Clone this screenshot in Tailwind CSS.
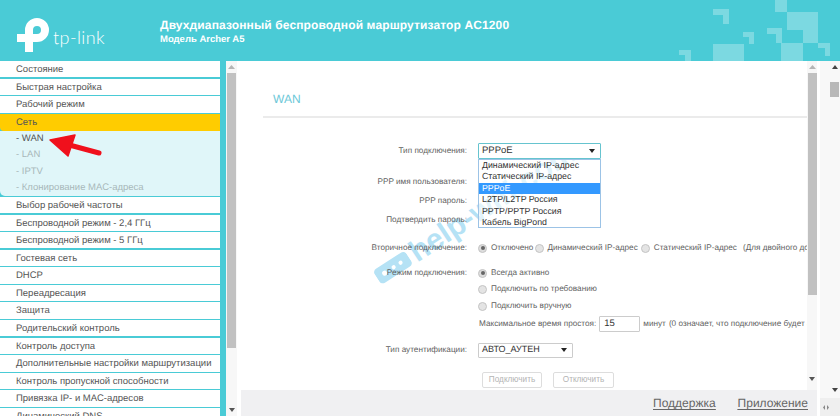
<!DOCTYPE html>
<html lang="ru">
<head>
<meta charset="utf-8">
<script src="https://cdn.jsdelivr.net/npm/@tailwindcss/browser@4"></script>
</head>
<body class="m-0 overflow-hidden bg-white">
<div class="w-[840px] h-[416px] flex flex-col overflow-hidden font-['Liberation_Sans',Arial,sans-serif] text-[#5f5f5f] [text-rendering:geometricPrecision]">

  <header class="relative h-[61px] shrink-0 bg-[#4acbd6] overflow-hidden flex">
    <svg class="absolute left-0 top-0" width="840" height="61" viewBox="0 0 840 61" fill="#fff" fill-opacity=".28">
      <path d="M713 9H729V24H723V15H713Z"/>
      <path d="M775 0H787V12H818V43H803V30H787V12H775Z"/>
      <path d="M713 44H744V61H713Z"/>
      <path d="M743 32H754V44H749V37H743Z"/>
      <path d="M767 28H782V43H776V34H767Z"/>
      <path d="M781 43H803V61H781Z"/>
      <path d="M818 43H830V56H825V48H818Z"/>
      <path d="M679 50H691V61H685V55H679Z"/>
    </svg>
    <div class="relative w-[160px] shrink-0">
      <svg class="absolute left-0 top-0" width="60" height="61" viewBox="0 0 60 61" fill="none" stroke="#fff" stroke-width="8">
        <path d="M29 52V30A8 8 0 1 1 37 38H17"/>
      </svg>
      <span class="absolute left-[53px] top-[26px] font-['Lato',sans-serif] font-light text-[18px] leading-[22px] text-white tracking-[0.4px]">tp-link</span>
    </div>
    <div class="relative pt-[17px] text-white font-bold">
      <div class="text-[12px] leading-[16px] tracking-[0.12px] whitespace-nowrap">Двухдиапазонный беспроводной маршрутизатор AC1200</div>
      <div class="text-[9.5px] leading-[12px] mt-[1px] whitespace-nowrap">Модель Archer A5</div>
    </div>
  </header>

  <div class="flex flex-1 min-h-0">
    <nav class="relative w-[226px] shrink-0 bg-[#4acbd6] pr-[6px] overflow-hidden text-[9.5px] text-[#555]">
      <div class="h-[16.4px] mb-[1.2px] bg-white pl-4 pt-[2px] flex items-center">Состояние</div>
      <div class="h-[16.4px] mb-[1.2px] bg-white pl-4 pt-[2px] flex items-center">Быстрая настройка</div>
      <div class="h-[16.6px] mb-[1.2px] bg-white pl-4 pt-[2px] flex items-center">Рабочий режим</div>
      <div class="h-[17px] bg-[#ffcc00] rounded-bl-[4px] pl-4 pt-[2px] flex items-center">Сеть</div>
      <div class="h-[65px] bg-[#e0f6f9] rounded-bl-[5px] mb-[1px]">
        <div class="h-[16.3px] pl-4 flex items-center text-[#555]">- WAN</div>
        <div class="h-[16.3px] pl-4 flex items-center text-[#a8b8ba]">- LAN</div>
        <div class="h-[16.3px] pl-4 flex items-center text-[#a8b8ba]">- IPTV</div>
        <div class="h-[16.3px] pl-4 flex items-center text-[#a8b8ba]">- Клонирование МАС-адреса</div>
      </div>
      <div class="h-[16.4px] mb-[1.2px] bg-white pl-4 pt-[2px] flex items-center">Выбор рабочей частоты</div>
      <div class="h-[16.4px] mb-[1.2px] bg-white pl-4 pt-[2px] flex items-center">Беспроводной режим - 2,4 ГГц</div>
      <div class="h-[16.4px] mb-[1.2px] bg-white pl-4 pt-[2px] flex items-center">Беспроводной режим - 5 ГГц</div>
      <div class="h-[16.4px] mb-[1.2px] bg-white pl-4 pt-[2px] flex items-center">Гостевая сеть</div>
      <div class="h-[16.4px] mb-[1.2px] bg-white pl-4 pt-[2px] flex items-center">DHCP</div>
      <div class="h-[16.4px] mb-[1.2px] bg-white pl-4 pt-[2px] flex items-center">Переадресация</div>
      <div class="h-[16.4px] mb-[1.2px] bg-white pl-4 pt-[2px] flex items-center">Защита</div>
      <div class="h-[16.4px] mb-[1.2px] bg-white pl-4 pt-[2px] flex items-center">Родительский контроль</div>
      <div class="h-[16.4px] mb-[1.2px] bg-white pl-4 pt-[2px] flex items-center">Контроль доступа</div>
      <div class="h-[16.4px] mb-[1.2px] bg-white pl-4 pt-[2px] flex items-center whitespace-nowrap">Дополнительные настройки маршрутизации</div>
      <div class="h-[16.4px] mb-[1.2px] bg-white pl-4 pt-[2px] flex items-center">Контроль пропускной способности</div>
      <div class="h-[16.4px] mb-[1.2px] bg-white pl-4 pt-[2px] flex items-center">Привязка IP- и МАС-адресов</div>
      <div class="h-[16.4px] mb-[1.2px] bg-white pl-4 pt-[2px] flex items-center">Динамический DNS</div>
      <svg class="absolute left-0 top-0" width="226" height="120" viewBox="0 61 226 120" fill="none">
        <path d="M99 153L62 143" stroke="#f0101c" stroke-width="5" stroke-linecap="round"/>
        <path d="M50 140L75 135L68 156Z" fill="#f0101c" stroke="#f0101c" stroke-width="1.5" stroke-linejoin="round"/>
      </svg>
    </nav>

    <div class="w-[11px] shrink-0 bg-[#f7f7f7] flex flex-col items-center">
      <div class="h-[12px] flex items-center text-[#b5b5b5]"><svg width="7" height="4" viewBox="0 0 7 4" fill="currentColor"><path d="M3.5 0L7 4H0Z"/></svg></div>
      <div class="w-[9px] h-[275px] bg-[#c1c1c1]"></div>
      <div class="flex-1 flex items-end pb-[4px] text-[#555]"><svg width="6" height="4" viewBox="0 0 6 4" fill="currentColor"><path d="M0 0H6L3 4Z"/></svg></div>
    </div>

    <div class="w-[580px] shrink-0 flex flex-col">
      <div class="relative h-[329px] flex overflow-hidden">
        <main class="relative w-[570px] shrink-0 overflow-hidden text-[8.2px]">
          <div class="absolute left-[140px] top-[200px] -rotate-[33deg] flex items-center gap-[4px] origin-left">
            <svg width="38" height="22" viewBox="0 0 46 26" fill="#b5e2f5"><rect width="46" height="20" y="3" rx="5"/><circle cx="11" cy="13" r="3" fill="#fff"/><circle cx="24" cy="13" r="2.5" fill="#fff"/><circle cx="34" cy="13" r="2.5" fill="#fff"/></svg>
            <span class="font-bold text-[30px] leading-[34px] text-[#b5e2f5] whitespace-nowrap">help-wifi.com</span>
          </div>

          <div class="relative">
            <div class="ml-[26px] h-[57px] border-b-2 border-[#ebebeb] pl-[10px] pt-[29px] text-[12px] leading-[18px] text-[#6cc8d8]">WAN</div>
            <div class="h-[25px]"></div>

            <div class="flex h-4 items-center whitespace-nowrap">
              <label class="w-[230px] shrink-0 text-right">Тип подключения:</label>
              <div class="ml-[11px] shrink-0 w-[123px] h-[16px] border border-[#66c4cf] bg-white rounded-[1px] text-[9.5px] text-[#333] flex items-center justify-between px-[3px] pr-[5px]"><span>PPPoE</span><svg width="6" height="4" viewBox="0 0 6 4" fill="#222"><path d="M0 0H6L3 4Z"/></svg></div>
            </div>
            <div class="flex h-4 items-center mt-[15px]"><label class="w-[230px] shrink-0 text-right">PPP имя пользователя:</label></div>
            <div class="flex h-4 items-center mt-[3px]"><label class="w-[230px] shrink-0 text-right">PPP пароль:</label></div>
            <div class="flex h-4 items-center mt-[3px]"><label class="w-[230px] shrink-0 text-right">Подтвердить пароль:</label></div>

            <div class="flex h-4 items-center mt-[12px] whitespace-nowrap">
              <label class="w-[230px] shrink-0 text-right">Вторичное подключение:</label>
              <span class="ml-[11px] shrink-0 w-[9px] h-[9px] rounded-full border border-[#c4c4c4] bg-[#ddd] flex items-center justify-center"><span class="w-[4px] h-[4px] rounded-full bg-[#666]"></span></span>
              <span class="ml-[4px]">Отключено</span>
              <span class="ml-[2px] shrink-0 w-[9px] h-[9px] rounded-full border border-[#c4c4c4] bg-[#e4e4e4]"></span>
              <span class="ml-[3px]">Динамический IP-адрес</span>
              <span class="ml-[3px] shrink-0 w-[9px] h-[9px] rounded-full border border-[#c4c4c4] bg-[#e4e4e4]"></span>
              <span class="ml-[4px]">Статический IP-адрес</span>
              <span class="ml-[6px]">(Для двойного доступа)</span>
            </div>

            <div class="flex h-4 items-center mt-[9px] whitespace-nowrap">
              <label class="w-[230px] shrink-0 text-right">Режим подключения:</label>
              <span class="ml-[11px] shrink-0 w-[9px] h-[9px] rounded-full border border-[#c4c4c4] bg-[#ddd] flex items-center justify-center"><span class="w-[4px] h-[4px] rounded-full bg-[#666]"></span></span>
              <span class="ml-[4px]">Всегда активно</span>
            </div>
            <div class="flex h-4 items-center mt-0 whitespace-nowrap pl-[241px]">
              <span class="shrink-0 w-[9px] h-[9px] rounded-full border border-[#c4c4c4] bg-[#e4e4e4]"></span>
              <span class="ml-[4px]">Подключить по требованию</span>
            </div>
            <div class="flex h-4 items-center mt-[1px] whitespace-nowrap pl-[241px]">
              <span class="shrink-0 w-[9px] h-[9px] rounded-full border border-[#c4c4c4] bg-[#e4e4e4]"></span>
              <span class="ml-[4px]">Подключить вручную</span>
            </div>
            <div class="flex h-4 items-center mt-[2px] whitespace-nowrap pl-[242px]">
              <span>Максимальное время простоя:</span>
              <span class="ml-[3px] shrink-0 w-[41px] h-[16px] border border-[#ccc] rounded-[1px] pl-[4px] text-[9.5px] text-[#333] flex items-center">15</span>
              <span class="ml-[3px]">минут</span>
              <span class="ml-[3px]">(0 означает, что подключение будет активно всегда)</span>
            </div>

            <div class="flex h-4 items-center mt-[10px] whitespace-nowrap">
              <label class="w-[230px] shrink-0 text-right">Тип аутентификации:</label>
              <div class="ml-[11px] shrink-0 w-[95px] h-[15px] border border-[#ccc] rounded-[1px] text-[9px] text-[#333] flex items-center justify-between pl-[3px] pr-[5px]"><span>АВТО_АУТЕН</span><svg width="6" height="4" viewBox="0 0 6 4" fill="#222"><path d="M0 0H6L3 4Z"/></svg></div>
            </div>

            <div class="flex h-4 mt-[14px] pl-[245px] gap-[11px] whitespace-nowrap text-[#b4b4b4]">
              <button class="w-[60px] h-[16px] border border-[#ddd] rounded-[2px] flex items-center justify-center">Подключить</button>
              <button class="w-[61px] h-[16px] border border-[#ddd] rounded-[2px] flex items-center justify-center">Отключить</button>
            </div>
          </div>

          <ul class="absolute left-[241px] top-[98px] w-[123px] h-[69px] border border-[#9cc3e6] text-[8.8px] leading-[11.4px] text-[#333] bg-white/60 whitespace-nowrap">
            <li class="pl-[3px]">Динамический IP-адрес</li>
            <li class="pl-[3px]">Статический IP-адрес</li>
            <li class="pl-[3px] bg-[#3399ff] text-white">PPPoE</li>
            <li class="pl-[3px]">L2TP/L2TP Россия</li>
            <li class="pl-[3px]">PPTP/PPTP Россия</li>
            <li class="pl-[3px]">Кабель BigPond</li>
          </ul>
        </main>
        <div class="w-[10px] shrink-0 bg-[#f7f7f7] flex flex-col items-center">
          <div class="h-[12px] flex items-center text-[#b5b5b5]"><svg width="7" height="4" viewBox="0 0 7 4" fill="currentColor"><path d="M3.5 0L7 4H0Z"/></svg></div>
          <div class="w-[9px] h-[222px] bg-[#c1c1c1]"></div>
          <div class="flex-1 flex items-end pb-[9px] text-[#555]"><svg width="6" height="4" viewBox="0 0 6 4" fill="currentColor"><path d="M0 0H6L3 4Z"/></svg></div>
        </div>
      </div>
      <footer class="ml-[4px] flex-1 bg-[#f0f0f2] flex items-center justify-end gap-[22px] pr-[9px] text-[12px] text-[#666] underline underline-offset-2">
        <a>Поддержка</a><a>Приложение</a>
      </footer>
    </div>

    <div class="w-[3px] shrink-0 bg-white"></div>
    <div class="flex-1 bg-[#f8f8f8] flex flex-col items-end">
      <div class="w-[11px] flex-1 flex flex-col items-center">
        <div class="h-[12px] flex items-center text-[#444]"><svg width="6" height="4" viewBox="0 0 6 4" fill="currentColor"><path d="M3 0L6 4H0Z"/></svg></div>
        <div class="w-[9px] h-[15px] mt-[9px] bg-[#b8b8b8]"></div>
        <div class="flex-1 flex items-end pb-[6px] text-[#444]"><svg width="6" height="4" viewBox="0 0 6 4" fill="currentColor"><path d="M0 0H6L3 4Z"/></svg></div>
      </div>
      <div class="w-full h-[18px] bg-[#efefef] flex items-center pl-[3px]">
        <svg width="6" height="5" viewBox="0 0 6 5" fill="#888"><path d="M2 0V5L0 2.5Z"/><path d="M4 0V5L6 2.5Z"/></svg>
      </div>
    </div>
  </div>
</div>
</body>
</html>
